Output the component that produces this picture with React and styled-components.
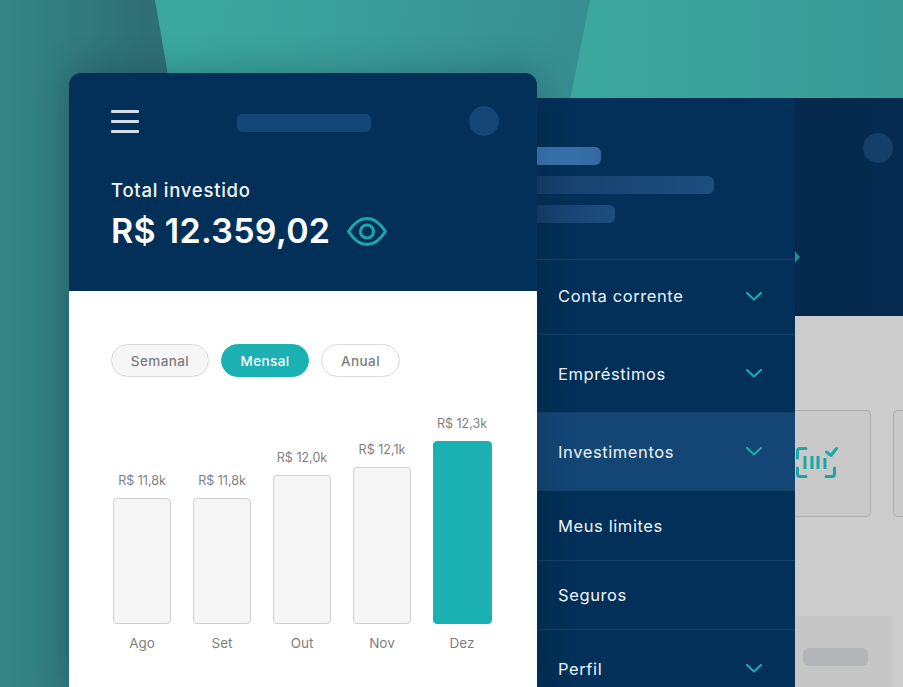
import React from "react";
import styled, { createGlobalStyle } from "styled-components";

const months = [
  { month: "Ago", value: "R$ 11,8k", height: 126 },
  { month: "Set", value: "R$ 11,8k", height: 126 },
  { month: "Out", value: "R$ 12,0k", height: 149 },
  { month: "Nov", value: "R$ 12,1k", height: 157 },
  { month: "Dez", value: "R$ 12,3k", height: 183, active: true },
];

const menu = [
  { label: "Conta corrente", size: 75, arrow: true, lift: 2 },
  { label: "Empréstimos", size: 78, arrow: true },
  { label: "Investimentos", size: 78, arrow: true, active: true },
  { label: "Meus limites", size: 70 },
  { label: "Seguros", size: 69 },
  { label: "Perfil", size: 78, arrow: true },
];

const Chevron = () => (
  <svg width="16" height="11" viewBox="0 -1 16 11" fill="none">
    <path d="M1 1l7 6.5L15 1" stroke="#1fa9ae" strokeWidth="2.2" strokeLinecap="round" strokeLinejoin="round" />
  </svg>
);

const Eye = () => (
  <svg width="40" height="30" viewBox="0 -0.5 40 30" fill="none">
    <path d="M1.6 15C7 6.4 13 2 20 2s13 4.4 18.4 13C33 23.6 27 28 20 28S7 23.6 1.6 15z" stroke="#1fa5aa" strokeWidth="3" strokeLinejoin="round" />
    <circle cx="20" cy="15" r="6.6" stroke="#1fa5aa" strokeWidth="3" />
  </svg>
);

const BarcodeCheck = () => (
  <svg width="44" height="33" viewBox="0 0 44 33" fill="none" stroke="#19a8a6" strokeWidth="3" strokeLinejoin="round">
    <path d="M11 2.5H5Q2.5 2.5 2.5 5v7M2.5 22v6q0 2.5 2.5 2.5h6M31 30.5h6q2.5 0 2.5-2.5v-6" strokeLinecap="round" />
    <path d="M10 10v13M17 10v13M23 10v13M30 12v11" />
    <path d="M31.5 6l4.500 3.500 5.500-7" strokeLinecap="round" />
  </svg>
);

const App = () => {
  return (
    <Stage>
      <GlobalStyle />
      <BandLeft />
      <BandRight />

      <BackPanel>
        <Drawer>
          <DrawerTop>
            <SkeletonBar $width={64} $color="linear-gradient(90deg, #3a78b4, #3568a0)" />
            <SkeletonBar $width={177} $color="linear-gradient(90deg, #173f6b, #1d4e80)" />
            <SkeletonBar $width={78} $color="linear-gradient(90deg, #173f6b, #1d4e80)" />
            <DrawerHandle />
          </DrawerTop>
          {menu.map((item) => (
            <MenuRow key={item.label} $size={item.size} $active={item.active} $lift={item.lift}>
              {item.label}
              {item.arrow && <Chevron />}
            </MenuRow>
          ))}
        </Drawer>
        <Dimmed>
          <DimmedHeader>
            <DimmedAvatar />
          </DimmedHeader>
          <DimmedBody>
            <DimmedCards>
              <DimmedCard>
                <BarcodeCheck />
              </DimmedCard>
              <NextCard />
            </DimmedCards>
            <DimmedFooter>
              <DimmedPill />
            </DimmedFooter>
          </DimmedBody>
        </Dimmed>
      </BackPanel>

      <Phone>
        <PhoneHeader>
          <TopRow>
            <Burger>
              <span />
              <span />
              <span />
            </Burger>
            <TitlePill />
            <Avatar />
          </TopRow>
          <TotalLabel>Total investido</TotalLabel>
          <TotalRow>
            <TotalValue>R$ 12.359,02</TotalValue>
            <Eye />
          </TotalRow>
        </PhoneHeader>
        <PhoneBody>
          <Filters>
            <Filter $width={98} $fill="#f6f6f6">Semanal</Filter>
            <Filter $width={88} $active>Mensal</Filter>
            <Filter $width={79}>Anual</Filter>
          </Filters>
          <Chart>
            {months.map((item) => (
              <Column key={item.month}>
                <BarValue>{item.value}</BarValue>
                <Bar $height={item.height} $active={item.active} />
                <BarMonth>{item.month}</BarMonth>
              </Column>
            ))}
          </Chart>
        </PhoneBody>
      </Phone>
    </Stage>
  );
};

export default App;

// Styled Components
const GlobalStyle = createGlobalStyle`
  html, body {
    margin: 0;
    padding: 0;
  }
  body {
    font-family: "Inter", "Open Sans", sans-serif;
  }
`;

const Stage = styled.div`
  position: relative;
  width: 903px;
  height: 687px;
  overflow: hidden;
  background: linear-gradient(90deg, #348684 0%, #2f7075 16%, #347f80 100%);
`;

const BandLeft = styled.div`
  position: absolute;
  left: 150px;
  top: 0;
  width: 460px;
  height: 110px;
  clip-path: polygon(5px 0, 100% 0, 100% 100%, 24px 100%);
  background: linear-gradient(100deg, #3ba99f 0%, #3a9e9a 45%, #368a8d 100%);
`;

const BandRight = styled.div`
  position: absolute;
  left: 565px;
  top: 0;
  width: 338px;
  height: 110px;
  clip-path: polygon(25px 0, 100% 0, 100% 100%, 3px 100%);
  background: linear-gradient(90deg, #3ca89e 0%, #3a9f9a 60%, #399a96 100%);
`;

const BackPanel = styled.div`
  position: absolute;
  left: 537px;
  top: 98px;
  right: 0;
  bottom: 0;
  display: flex;
`;

const Drawer = styled.div`
  width: 258px;
  flex: none;
  background: #033058;
  color: #eef4f8;
`;

const DrawerTop = styled.div`
  position: relative;
  height: 162px;
  box-sizing: border-box;
  padding-top: 49px;
  display: flex;
  flex-direction: column;
  gap: 11px;
  border-bottom: 1px solid #154168;
`;

const DrawerHandle = styled.span`
  position: absolute;
  right: -5px;
  bottom: -4px;
  width: 0;
  height: 0;
  border-left: 5px solid #1b8f98;
  border-top: 6px solid transparent;
  border-bottom: 6px solid transparent;
`;

const SkeletonBar = styled.div`
  width: ${(p) => p.$width}px;
  height: 18px;
  border-radius: 0 6px 6px 0;
  background: ${(p) => p.$color};
`;

const MenuRow = styled.div`
  height: ${(p) => p.$size}px;
  box-sizing: border-box;
  display: flex;
  align-items: center;
  justify-content: space-between;
  padding: 0 33px ${(p) => p.$lift || 0}px 21px;
  border-bottom: 1px solid #154168;
  font-size: 16.5px;
  font-weight: 400;
  letter-spacing: 0.6px;
  background: ${(p) => (p.$active ? "#134675" : "transparent")};
`;

const Dimmed = styled.div`
  flex: 1;
  display: flex;
  flex-direction: column;
  min-width: 0;
`;

const DimmedHeader = styled.div`
  height: 218px;
  flex: none;
  box-sizing: border-box;
  display: flex;
  justify-content: flex-end;
  padding: 35px 10px 0 0;
  background: linear-gradient(90deg, #04294c 0%, #052b50 100%);
`;

const DimmedAvatar = styled.div`
  width: 30px;
  height: 30px;
  border-radius: 50%;
  background: #143f69;
`;

const DimmedBody = styled.div`
  flex: 1;
  display: flex;
  flex-direction: column;
  justify-content: space-between;
  background: #cccccc;
`;

const DimmedCards = styled.div`
  display: flex;
  gap: 22px;
  padding-top: 94px;
`;

const DimmedCard = styled.div`
  width: 76px;
  height: 107px;
  flex: none;
  box-sizing: border-box;
  display: flex;
  align-items: center;
  border: 1px solid #aeaeae;
  border-left: none;
  border-radius: 0 5px 5px 0;
  padding-bottom: 2px;
  background: #c9c9c9;
`;

const NextCard = styled.div`
  flex: 1;
  height: 107px;
  box-sizing: border-box;
  border: 1px solid #aeaeae;
  border-right: none;
  border-radius: 5px 0 0 5px;
  background: #c9c9c9;
`;

const DimmedFooter = styled.div`
  width: 97px;
  height: 71px;
  box-sizing: border-box;
  padding: 32px 0 0 8px;
  background: #c6c6c6;
`;

const DimmedPill = styled.div`
  width: 65px;
  height: 18px;
  border-radius: 6px;
  background: #b3b5b8;
`;

const Phone = styled.div`
  position: absolute;
  left: 69px;
  top: 73px;
  bottom: 0;
  width: 468px;
  display: flex;
  flex-direction: column;
  border-radius: 12px 12px 0 0;
  overflow: hidden;
  box-shadow: 0 0 36px rgba(0, 20, 40, 0.28);
`;

const PhoneHeader = styled.div`
  height: 218px;
  flex: none;
  box-sizing: border-box;
  padding: 33px 38px 0 42px;
  background: #033058;
`;

const TopRow = styled.div`
  display: flex;
  align-items: center;
  justify-content: space-between;
`;

const Burger = styled.div`
  width: 28px;
  display: flex;
  flex-direction: column;
  gap: 7px;

  span {
    height: 3px;
    border-radius: 1px;
    background: #d3deea;
  }
`;

const TitlePill = styled.div`
  width: 134px;
  height: 18px;
  margin-top: 3px;
  border-radius: 5px;
  background: #144676;
`;

const Avatar = styled.div`
  width: 30px;
  height: 30px;
  border-radius: 50%;
  background: #144676;
`;

const TotalLabel = styled.div`
  margin-top: 42px;
  font-size: 18.5px;
  line-height: 24px;
  font-weight: 500;
  letter-spacing: 0.75px;
  color: #f2f6f9;
`;

const TotalRow = styled.div`
  margin-top: 8px;
  display: flex;
  align-items: center;
  gap: 17px;
`;

const TotalValue = styled.div`
  font-size: 34px;
  line-height: 42px;
  font-weight: 600;
  letter-spacing: 0.3px;
  color: #ffffff;
`;

const PhoneBody = styled.div`
  flex: 1;
  box-sizing: border-box;
  padding: 53px 45px 0 42px;
  background: #ffffff;
`;

const Filters = styled.div`
  display: flex;
  gap: 12px;
`;

const Filter = styled.div`
  width: ${(p) => p.$width}px;
  height: 33px;
  box-sizing: border-box;
  display: flex;
  align-items: center;
  justify-content: center;
  border-radius: 17px;
  border: 1px solid ${(p) => (p.$active ? "#1bb0b2" : "#d9d9d9")};
  background: ${(p) => (p.$active ? "#1bb0b2" : p.$fill || "#ffffff")};
  color: ${(p) => (p.$active ? "#ffffff" : "#7c7c7c")};
  font-size: 13.5px;
  font-weight: 500;
  letter-spacing: 0.4px;
`;

const Chart = styled.div`
  height: 245px;
  margin-top: 30px;
  padding-left: 2px;
  display: flex;
  align-items: flex-end;
  gap: 22px;
`;

const Column = styled.div`
  width: 58px;
  display: flex;
  flex-direction: column;
  align-items: center;
  white-space: nowrap;
`;

const BarValue = styled.div`
  height: 18px;
  margin-bottom: 8px;
  font-size: 12.5px;
  line-height: 18px;
  color: #7f7f7f;
`;

const Bar = styled.div`
  width: ${(p) => (p.$active ? "59px" : "100%")};
  align-self: flex-start;
  height: ${(p) => p.$height}px;
  box-sizing: border-box;
  border-radius: 4px;
  border: 1.5px solid ${(p) => (p.$active ? "#1bb0b2" : "#cfcfcf")};
  background: ${(p) => (p.$active ? "#1bb0b2" : "#f6f6f6")};
`;

const BarMonth = styled.div`
  height: 18px;
  margin-top: 10px;
  font-size: 13.5px;
  line-height: 18px;
  color: #7f7f7f;
`;
